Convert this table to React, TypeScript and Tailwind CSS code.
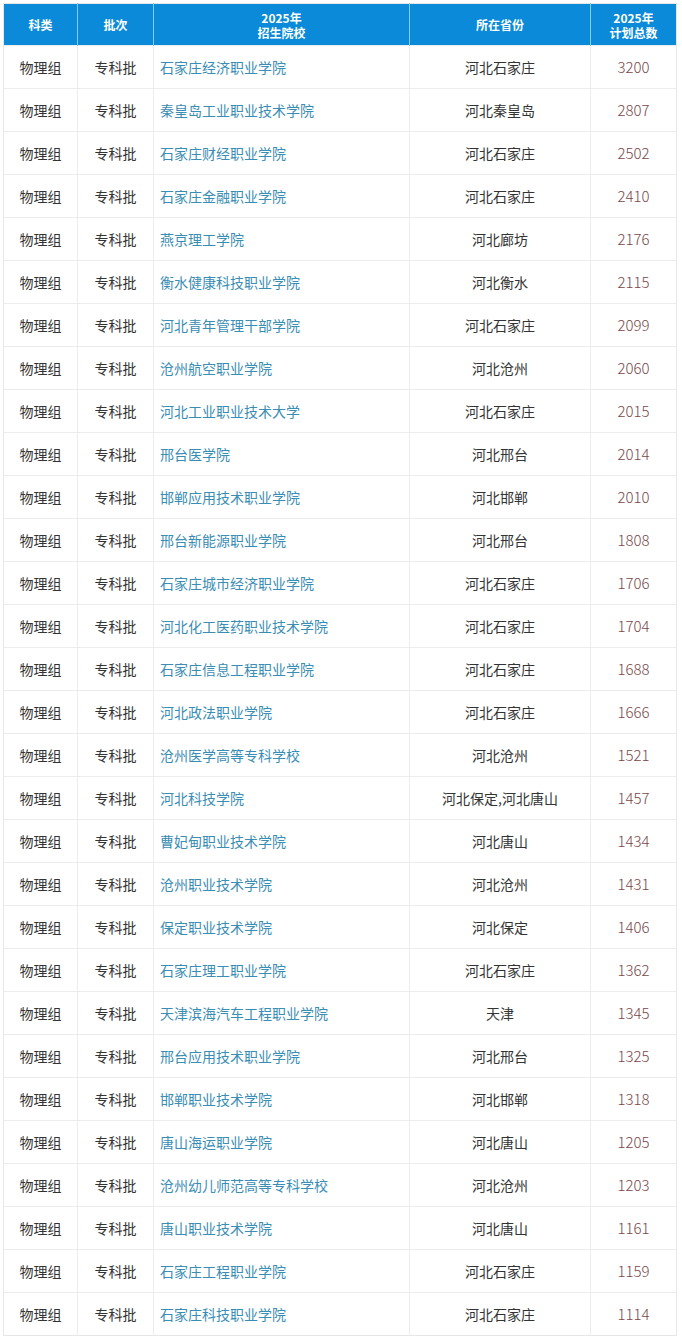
import React from "react";

const rows: [string, string, string][] = [
  ["石家庄经济职业学院", "河北石家庄", "3200"],
  ["秦皇岛工业职业技术学院", "河北秦皇岛", "2807"],
  ["石家庄财经职业学院", "河北石家庄", "2502"],
  ["石家庄金融职业学院", "河北石家庄", "2410"],
  ["燕京理工学院", "河北廊坊", "2176"],
  ["衡水健康科技职业学院", "河北衡水", "2115"],
  ["河北青年管理干部学院", "河北石家庄", "2099"],
  ["沧州航空职业学院", "河北沧州", "2060"],
  ["河北工业职业技术大学", "河北石家庄", "2015"],
  ["邢台医学院", "河北邢台", "2014"],
  ["邯郸应用技术职业学院", "河北邯郸", "2010"],
  ["邢台新能源职业学院", "河北邢台", "1808"],
  ["石家庄城市经济职业学院", "河北石家庄", "1706"],
  ["河北化工医药职业技术学院", "河北石家庄", "1704"],
  ["石家庄信息工程职业学院", "河北石家庄", "1688"],
  ["河北政法职业学院", "河北石家庄", "1666"],
  ["沧州医学高等专科学校", "河北沧州", "1521"],
  ["河北科技学院", "河北保定,河北唐山", "1457"],
  ["曹妃甸职业技术学院", "河北唐山", "1434"],
  ["沧州职业技术学院", "河北沧州", "1431"],
  ["保定职业技术学院", "河北保定", "1406"],
  ["石家庄理工职业学院", "河北石家庄", "1362"],
  ["天津滨海汽车工程职业学院", "天津", "1345"],
  ["邢台应用技术职业学院", "河北邢台", "1325"],
  ["邯郸职业技术学院", "河北邯郸", "1318"],
  ["唐山海运职业学院", "河北唐山", "1205"],
  ["沧州幼儿师范高等专科学校", "河北沧州", "1203"],
  ["唐山职业技术学院", "河北唐山", "1161"],
  ["石家庄工程职业学院", "河北石家庄", "1159"],
  ["石家庄科技职业学院", "河北石家庄", "1114"],
];

export default function App() {
  return (
    <div
      className="w-[682px] h-[1342px] bg-white pt-[3px] pl-[3px]"
      style={{ fontFamily: '"Microsoft YaHei", "Noto Sans CJK SC", sans-serif' }}
    >
      <table className="border-collapse table-fixed w-[673px] border border-[#e6e6e6]">
        <colgroup>
          <col className="w-[74px]" />
          <col className="w-[76px]" />
          <col className="w-[256px]" />
          <col className="w-[181px]" />
          <col className="w-[86px]" />
        </colgroup>
        <thead>
          <tr className="h-[42px] bg-[#0a8ad8] text-white text-[12px] font-bold leading-[15px]">
            <th className="border-r border-[#7fd0f0]">科类</th>
            <th className="border-r border-[#7fd0f0]">批次</th>
            <th className="border-r border-[#7fd0f0]">
              2025年
              <br />
              招生院校
            </th>
            <th className="border-r border-[#7fd0f0]">所在省份</th>
            <th>
              2025年
              <br />
              计划总数
            </th>
          </tr>
        </thead>
        <tbody className="text-[14px]">
          {rows.map(([school, prov, num], i) => (
            <tr key={i} className="h-[43px] border-t border-[#ececec]">
              <td className="text-center text-[#333] border-r border-[#ececec]">物理组</td>
              <td className="text-center text-[#333] border-r border-[#ececec]">专科批</td>
              <td className="pl-[6px] text-[#3a8db3] border-r border-[#ececec]">{school}</td>
              <td className="text-center text-[#333] border-r border-[#ececec]">{prov}</td>
              <td className="text-center text-[#7a4747] text-[15px] font-light">{num}</td>
            </tr>
          ))}
        </tbody>
      </table>
    </div>
  );
}
